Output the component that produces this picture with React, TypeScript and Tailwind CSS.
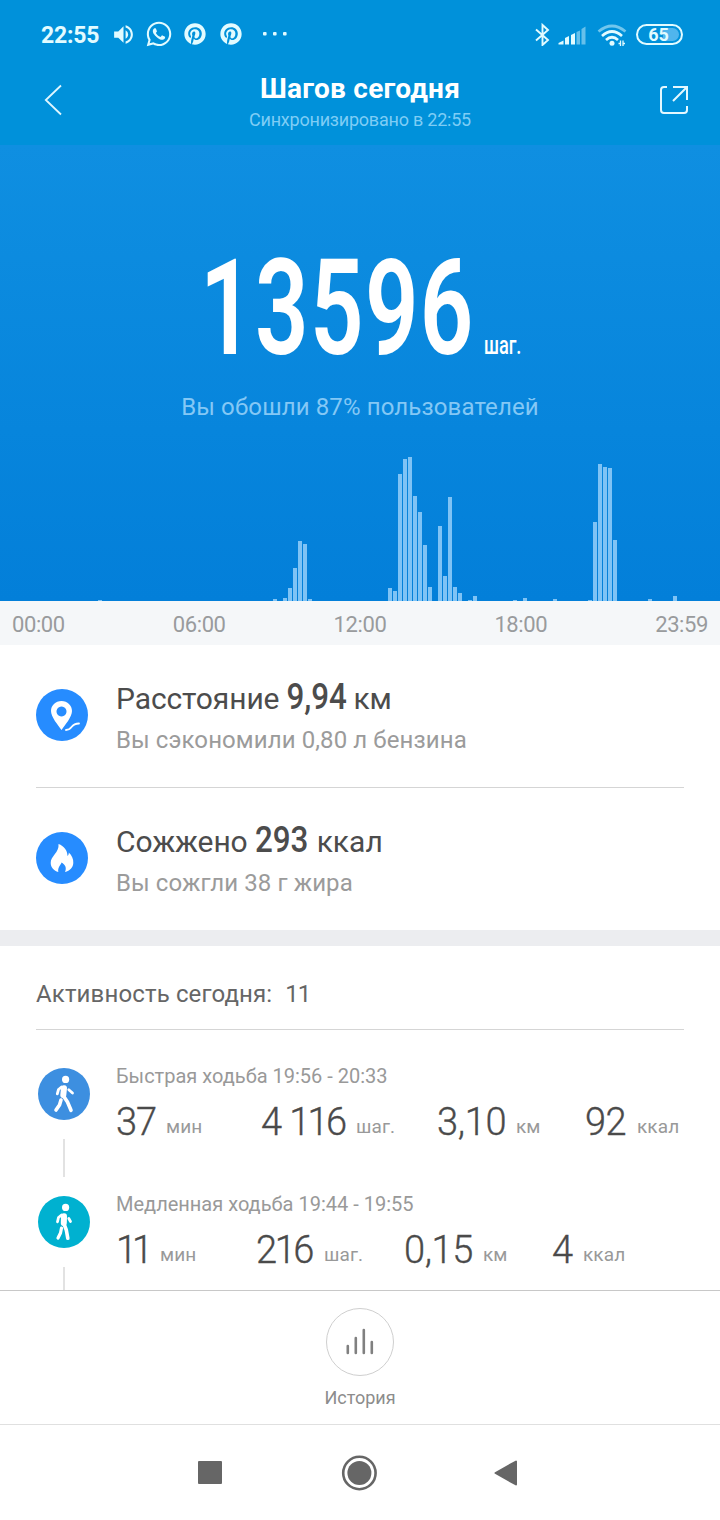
import React from "react";
import { FaWhatsapp, FaPinterest } from "react-icons/fa";
import { MdVolumeUp } from "react-icons/md";

// Steps per ten-minute slot, as [slot index, bar height in px].
const bars: [number, number][] = [
  [19, 1], [54, 2], [56, 3], [57, 13], [58, 33], [59, 60], [60, 57], [61, 2],
  [77, 13], [78, 10], [79, 127], [80, 142], [81, 144], [82, 105], [83, 89], [84, 56], [85, 14],
  [87, 75], [88, 25], [89, 104], [90, 14], [91, 8], [93, 1], [94, 5],
  [102, 1], [104, 3], [110, 2], [117, 1], [118, 79], [119, 137], [120, 134], [121, 133], [122, 61],
  [129, 2], [134, 5],
];

const heights: number[] = Array.from({ length: 144 }, (_, i) => {
  const found = bars.find(([slot]) => slot === i);
  return found ? found[1] : 0;
});

function StatusBar() {
  return (
    <div className="flex h-[68px] items-center pl-[41px] pr-[37px] text-[#e2fbff]">
      <span className="w-[70px] whitespace-nowrap pt-[3px] text-[23px] font-bold leading-[68px] tracking-[-0.2px]">22:55</span>
      <MdVolumeUp className="h-[25px] w-[25px]" />
      <FaWhatsapp className="ml-[9px] h-[28px] w-[28px]" />
      <FaPinterest className="ml-[11px] h-[22px] w-[22px]" />
      <FaPinterest className="ml-[14px] h-[22px] w-[22px]" />
      <svg className="ml-5 h-6 w-[26px]" viewBox="0 0 26 24" fill="currentColor">
        <rect x="1" y="10" width="3.6" height="3.6" rx="1" />
        <rect x="11" y="10" width="3.6" height="3.6" rx="1" />
        <rect x="21" y="10" width="3.6" height="3.6" rx="1" />
      </svg>
      <svg className="ml-auto h-6 w-[16px]" viewBox="0 0 16 24" fill="none" stroke="currentColor" strokeWidth="1.9">
        <path d="M2 7.5 L14 18 L8.500 23 V3 L14 8 L2 18.5" />
      </svg>
      <svg className="ml-[8px] h-6 w-[28px]" viewBox="0 0 28 24" fill="currentColor">
        <path d="M0.5 21 L5.500 18.500 V22.500 H0.500z M7 16 L11 14 V22.500 H7z M13 13 L17 11 V22.500 H13z" />
        <path opacity=".45" d="M18.500 10 L22 8.500 V22.500 H18.500z M23.500 7 L27.500 4.500 V22.500 H23.500z" />
      </svg>
      <svg className="ml-[11px] h-6 w-[30px]" viewBox="0 0 30 24" fill="none" stroke="currentColor" strokeWidth="2.7">
        <path opacity=".5" d="M1.5 9.500 Q15 -1.500 28.5 9.500" />
        <path d="M5 14 Q15 5 25 14 M9 18 Q15 12.500 21 18" />
        <circle cx="15" cy="21.200" r="2.500" fill="currentColor" stroke="none" />
        <path strokeWidth="1.3" d="M23.5 18.500 v5.500 M26 18.500 v5.500 M21.5 21.500 h2 M26 21.500 h2" />
      </svg>
      <div className="ml-[9px] mt-px flex h-[21px] w-[47px] rounded-full border-2 border-current p-[2px]">
        <div className="flex h-full w-full items-center justify-center rounded-full bg-gradient-to-r from-transparent from-[60%] to-[#50b5ed] to-[60%] pr-[2px] pt-px text-[18px] font-bold leading-none">65</div>
      </div>
    </div>
  );
}

function Header() {
  return (
    <div className="flex h-[77px] justify-between pl-[44px] pr-[31px] text-white">
      <svg className="mt-[16px] h-8 w-5" viewBox="0 0 20 32" fill="none" stroke="#dff6ff" strokeWidth="1.8">
        <path d="M17 1.5 L1.8 16 L17 30.5" />
      </svg>
      <div className="-ml-[3px] flex flex-1 flex-col items-center whitespace-nowrap pt-px">
        <h1 className="h-[40px] text-[28px] font-bold leading-[40px] tracking-[0.25px]">Шагов сегодня</h1>
        <p className="-mt-[2px] text-[18px] leading-[25px] tracking-[-0.22px] text-[#7ecdf5]">Синхронизировано в 22:55</p>
      </div>
      <svg className="mt-[17px] h-[30px] w-[30px]" viewBox="0 0 30 30" fill="none" stroke="#e4f8ff" strokeWidth="2">
        <path d="M8 2 H5 Q2 2 2 5 V25 Q2 28 5 28 H25 Q28 28 28 25 V21 M14 2 H28 V15 M28 2 L14 16" />
      </svg>
    </div>
  );
}

function Hero() {
  return (
    <section className="flex h-[456px] flex-col bg-gradient-to-b from-[#0f8fe1] to-[#037fd9]">
      <div className="mt-[80px] flex h-[160px] justify-center pl-[4px] text-white">
        <div className="flex w-[274px] justify-center whitespace-nowrap">
          <span className="-ml-[2px] origin-center scale-x-[0.7] text-[134px] font-semibold leading-[168px] tracking-[2px]">13596</span>
        </div>
        <div className="ml-[5px] flex w-[42px] justify-center whitespace-nowrap">
          <span className="ml-[2px] origin-center scale-x-[0.73] text-[25px] font-medium leading-[241px]">шаг.</span>
        </div>
      </div>
      <p className="mt-[5px] text-center text-[24px] leading-[34px] tracking-[0.12px] text-[#84c8f5]">
        Вы обошли 87% пользователей
      </p>
      <div className="mt-auto flex h-[150px] items-end gap-px pl-[3px]">
        {heights.map((h, i) => (
          <div key={i} className="w-1 shrink-0 bg-[#7fc3f5]" style={{ height: h }} />
        ))}
      </div>
    </section>
  );
}

function TimeAxis() {
  return (
    <div className="flex h-[44px] justify-between bg-[#f5f7f9] px-3 text-[22px] leading-[47px] tracking-[-0.4px] text-[#999b9d]">
      <span>00:00</span>
      <span>06:00</span>
      <span>12:00</span>
      <span>18:00</span>
      <span>23:59</span>
    </div>
  );
}

function PinIcon() {
  return (
    <svg className="h-[52px] w-[52px]" viewBox="0 0 52 52">
      <circle cx="26" cy="26" r="26" fill="#268cff" />
      <path fillRule="evenodd" fill="#fff" d="M25.5 12 C31.5 12 36 16.5 36 22 C36 28 29 36 25.5 41 C22 36 15 28 15 22 C15 16.5 19.5 12 25.5 12z M25.5 17.5 a5 5 0 1 0 .01 0z" />
      <path d="M30 41 C37 41 34 34.5 43 34.5" fill="none" stroke="#fff" strokeWidth="1.8" strokeLinecap="round" />
    </svg>
  );
}

function FlameIcon() {
  return (
    <svg className="h-[52px] w-[52px]" viewBox="0 0 52 52">
      <circle cx="26" cy="26" r="26" fill="#268cff" />
      <path fill="#fff" d="M22.5 12 C28 14 31.5 18.500 31.5 24 C32.500 23 33 21.500 32.700 20.500 C36 23.500 37.500 27 37.300 31 C37 35.500 34 38.800 29 40 C31 35.500 29 32.500 25.500 30.500 C25 33 21.500 35 22.300 40 C18 38.800 14.800 35.500 14.700 31 C14.500 24 23.500 20.500 22.500 12z" />
    </svg>
  );
}

type SummaryProps = { icon: React.ReactNode; label: string; value: string; valueBox: string; unit: string; note: string };

function Summary({ icon, label, value, valueBox, unit, note }: SummaryProps) {
  return (
    <div className="flex h-[142px] pt-[44px]">
      {icon}
      <div className="-mt-[14px] ml-[28px] flex flex-col whitespace-nowrap">
        <div className="flex h-[48px] text-[30px] leading-[48px] text-[#4c4c4c]">
          <span className="tracking-[-0.1px]">{label}</span>
          <span className={valueBox}>
            <span className="origin-center scale-x-[0.87] text-[36px] font-medium leading-[44px]">{value}</span>
          </span>
          <span>{unit}</span>
        </div>
        <p className="-mt-px text-[24px] leading-[36px] tracking-[0.1px] text-[#9b9b9b]">{note}</p>
      </div>
    </div>
  );
}

function Walker({ color, brisk }: { color: string; brisk: boolean }) {
  return (
    <svg className="h-[52px] w-[52px]" viewBox="0 0 52 52" fill="none" stroke="#fff" strokeLinecap="round" strokeLinejoin="round">
      <circle cx="26" cy="26" r="26" fill={color} stroke="none" />
      <circle cx="27.600" cy="11.400" r="3.600" fill="#fff" stroke="none" />
      {brisk ? (
        <>
          <path strokeWidth="6" d="M26 20.300 L25.300 27" />
          <path strokeWidth="3.600" d="M25.500 28 L29.500 34 L33 42.300" />
          <path strokeWidth="3.600" d="M23 32 L21.500 37 L18 42" />
          <path strokeWidth="2.800" d="M23.500 19 L20.500 21.500 L19.300 25.800 M30.800 21.700 L34.500 25" />
        </>
      ) : (
        <>
          <path strokeWidth="6" d="M26 20.300 L25.800 27" />
          <path strokeWidth="3.600" d="M26 28 L28.300 34 L29.800 42.300" />
          <path strokeWidth="3.200" d="M23.500 32 L22.500 37 L20 42" />
          <path strokeWidth="2.800" d="M23.500 19 L20.500 21.500 L19.500 25.800 M30.800 22.500 L32.500 25.500" />
        </>
      )}
    </svg>
  );
}

type Stat = { value: string; unit: string; box: string; number: string };

function Activity({ icon, title, stats }: { icon: React.ReactNode; title: string; stats: Stat[] }) {
  return (
    <div className="flex h-[128px] shrink-0 pl-[38px]">
      <div className="flex w-[52px] shrink-0 flex-col items-center">
        {icon}
        <div className="mt-[19px] h-[38px] w-[2px] bg-[#e2e2e2]" />
      </div>
      <div className="-mt-[8px] ml-[26px] flex flex-col whitespace-nowrap">
        <p className="h-[32px] text-[20px] leading-[32px] text-[#999]">{title}</p>
        <div className="flex h-[56px] items-baseline text-[38px] font-light leading-[60px] text-[#4a4a4a] [-webkit-text-stroke:0.35px_#4a4a4a]">
          {stats.map((s) => (
            <div key={s.unit} className={s.box}>
              <span className={s.number}>{s.value}</span>
              <span className="pb-[2px] text-[19px] font-normal leading-[26px] tracking-[0.2px] text-[#999] [-webkit-text-stroke:0] -translate-y-[2px] last:tracking-[0.1px]">{s.unit}</span>
            </div>
          ))}
        </div>
      </div>
    </div>
  );
}

const brisk: Stat[] = [
  { value: "37", unit: "мин", box: "flex items-baseline w-[145px]", number: "w-[50px] tracking-[-1.2px]" },
  { value: "4 116", unit: "шаг.", box: "flex items-baseline w-[176px]", number: "w-[95px] tracking-[-2.6px] [word-spacing:3px]" },
  { value: "3,10", unit: "км", box: "flex items-baseline w-[148px]", number: "w-[79px] tracking-[-0.3px]" },
  { value: "92", unit: "ккал", box: "flex items-baseline w-[100px]", number: "w-[52px] tracking-[-0.6px]" },
];

const slow: Stat[] = [
  { value: "11", unit: "мин", box: "flex items-baseline w-[140px]", number: "w-[44px] tracking-[-5px]" },
  { value: "216", unit: "шаг.", box: "flex items-baseline w-[148px]", number: "w-[68px] tracking-[-2.4px]" },
  { value: "0,15", unit: "км", box: "flex items-baseline w-[148px]", number: "w-[79px] tracking-[-0.4px]" },
  { value: "4", unit: "ккал", box: "flex items-baseline w-[100px]", number: "w-[31px]" },
];

function HistoryBar() {
  return (
    <div className="flex h-[135px] flex-col items-center border-y border-t-[#c8c8c8] border-b-[#e0e0e0] bg-white pt-[17px]">
      <div className="flex h-[68px] w-[68px] items-center justify-center rounded-full border border-[#cfcfcf]">
        <svg className="h-[30px] w-[30px]" viewBox="0 0 30 30" stroke="#808080" strokeWidth="2.600" strokeLinecap="round">
          <path d="M2.800 19 V26 M10.800 11 V26 M18.800 3 V26 M26.800 15 V26" />
        </svg>
      </div>
      <span className="mt-[9px] text-[18px] leading-[26px] text-[#8c8c8c]">История</span>
    </div>
  );
}

function SystemNav() {
  return (
    <div className="flex h-[95px] items-center pl-[198px]">
      <div className="h-[23px] w-[24px] rounded-[1px] bg-[#666]" />
      <svg className="ml-[119px] h-[36px] w-[37px]" viewBox="0 0 37 36">
        <circle cx="18.400" cy="18" r="16.200" fill="none" stroke="#666" strokeWidth="2.600" />
        <circle cx="18.400" cy="18" r="12" fill="#666" />
      </svg>
      <svg className="ml-[116px] h-[26px] w-[24px]" viewBox="0 0 24 26">
        <path d="M1.500 13 L22 1.500 V24.500z" fill="#666" stroke="#666" strokeWidth="2" strokeLinejoin="round" />
      </svg>
    </div>
  );
}

export default function App() {
  return (
    <main className="flex h-[1520px] w-[720px] flex-col overflow-hidden bg-white font-['Roboto',sans-serif]">
      <header className="shrink-0 bg-[#0091da]">
        <StatusBar />
        <Header />
      </header>
      <Hero />
      <TimeAxis />
      <section className="h-[285px] shrink-0 px-9">
        <Summary icon={<PinIcon />} label="Расстояние" value="9,94" valueBox="flex w-[74px] justify-center" unit="км" note="Вы сэкономили 0,80 л бензина" />
        <div className="h-px bg-[#d5d5d5]" />
        <Summary icon={<FlameIcon />} label="Сожжено" value="293" valueBox="flex w-[69px] justify-center" unit="ккал" note="Вы сожгли 38 г жира" />
      </section>
      <div className="h-4 shrink-0 bg-[#ecedf0]" />
      <section className="flex h-[344px] shrink-0 flex-col overflow-hidden">
        <h2 className="mx-9 flex h-[84px] shrink-0 gap-[13px] border-b border-[#d5d5d5] text-[24px] leading-[97px] tracking-[0.14px] text-[#666]">
          <span>Активность сегодня:</span>
          <span className="tracking-[-1px]">11</span>
        </h2>
        <div className="mt-[38px] flex flex-col">
          <Activity icon={<Walker color="#3d8fe0" brisk />} title="Быстрая ходьба 19:56 - 20:33" stats={brisk} />
          <Activity icon={<Walker color="#00b1d0" brisk={false} />} title="Медленная ходьба 19:44 - 19:55" stats={slow} />
        </div>
      </section>
      <HistoryBar />
      <SystemNav />
    </main>
  );
}
